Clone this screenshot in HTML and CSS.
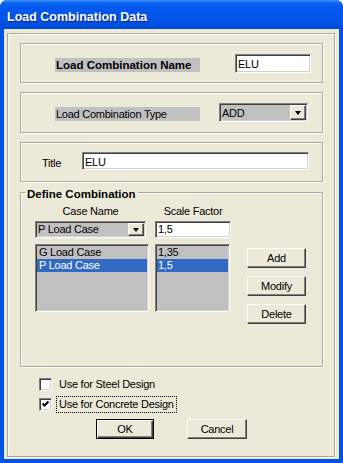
FILE: index.html
```html
<!DOCTYPE html>
<html>
<head>
    <title>Load Combination Data</title>
    <link rel="stylesheet" href="styles.css">
</head>
<body>
<div class="window">
    <div class="titlebar">Load Combination Data</div>
    <div class="client">
        <div class="frame">
            <div class="group group-name">
                <span class="tag tag-bold">Load Combination Name</span>
                <div class="field field-name">ELU</div>
            </div>

            <div class="group group-type">
                <span class="tag">Load Combination Type</span>
                <div class="combo combo-type">
                    <span class="combo-text">ADD</span>
                    <span class="drop"><i></i></span>
                </div>
            </div>

            <div class="group group-title">
                <span class="title-label">Title</span>
                <div class="field field-title">ELU</div>
            </div>

            <fieldset class="define">
                <legend>Define Combination</legend>
                <div class="define-row heads">
                    <span class="col-case">Case Name</span>
                    <span class="col-scale">Scale Factor</span>
                </div>
                <div class="define-row inputs">
                    <div class="combo combo-case">
                        <span class="combo-text">P Load Case</span>
                        <span class="drop"><i></i></span>
                    </div>
                    <div class="field field-scale">1,5</div>
                </div>
                <div class="define-row lists">
                    <ul class="list list-case">
                        <li>G Load Case</li>
                        <li class="selected">P Load Case</li>
                    </ul>
                    <ul class="list list-scale">
                        <li>1,35</li>
                        <li class="selected">1,5</li>
                    </ul>
                    <div class="side-buttons">
                        <button class="btn">Add</button>
                        <button class="btn">Modify</button>
                        <button class="btn">Delete</button>
                    </div>
                </div>
            </fieldset>

            <div class="check check-first">
                <span class="box"></span>
                <span class="check-label">Use for Steel Design</span>
            </div>
            <div class="check">
                <span class="box">
                    <svg width="9" height="9" viewBox="0 0 9 9"><path d="M1.5 3.5 L3.5 5.5 L7.5 1.5" fill="none" stroke="#000" stroke-width="2"/></svg>
                </span>
                <span class="check-label focused">Use for Concrete Design</span>
            </div>

            <div class="dialog-buttons">
                <button class="btn btn-default">OK</button>
                <button class="btn btn-cancel">Cancel</button>
            </div>
        </div>
    </div>
</div>
</body>
</html>
```

FILE: styles.css
```css
* {
    box-sizing: border-box;
}

body {
    margin: 0;
    background: #fff;
    font-family: "Liberation Sans", Arial, sans-serif;
    font-size: 11px;
    letter-spacing: -0.25px;
    color: #000;
}

/* window chrome */
.window {
    width: 343px;
    height: 463px;
    display: flex;
    flex-direction: column;
    background: #0054e3;
    border-radius: 7px 7px 0 0;
    overflow: hidden;
}

.titlebar {
    height: 29px;
    padding: 9px 0 0 7px;
    background: linear-gradient(#3d95ff 0, #0a62f2 3px, #0058ee 9px, #0055e8 20px, #004bd8 29px);
    color: #fff;
    font-size: 12.5px;
    font-weight: bold;
    letter-spacing: 0;
    line-height: 16px;
    text-shadow: 1px 1px 0 #0a1f7a;
}

.client {
    flex: 1;
    display: flex;
    margin: 0 4px 4px;
    padding: 4px 4px 2px 3px;
    background: #ece9d8;
}

/* etched frames */
.frame,
.group,
.define {
    border: 1px solid #aca899;
    box-shadow: inset 1px 1px 0 #fff, 1px 1px 0 #fff;
}

.frame {
    flex: 1;
    display: flex;
    flex-direction: column;
    padding: 9px 11px 0 12px;
}

.group {
    display: flex;
    align-items: flex-start;
}

.group-name {
    height: 40px;
    padding: 10px 0 0 34px;
}

.group-type {
    height: 41px;
    margin-top: 9px;
    padding: 10px 0 0 34px;
}

.group-title {
    height: 40px;
    margin-top: 9px;
    padding: 9px 0 0 21px;
}

.tag {
    width: 145px;
    height: 14px;
    margin-top: 4px;
    padding-left: 1px;
    background: #c0c0c0;
    line-height: 14px;
    white-space: nowrap;
}

.tag-bold {
    font-size: 11.5px;
    font-weight: bold;
    letter-spacing: 0;
}

.title-label {
    width: 40px;
    margin-top: 2px;
    line-height: 18px;
}

/* sunken inputs */
.field,
.combo,
.list,
.box {
    border: 1px solid;
    border-color: #808080 #fff #fff #808080;
    box-shadow: inset 1px 1px 0 #404040, inset -1px -1px 0 #d4d0c8;
}

.field {
    background: #fff;
    padding: 1px 2px 0;
    line-height: 16px;
}

.field-name {
    width: 76px;
    height: 19px;
    margin-left: 35px;
}

.field-title {
    width: 227px;
    height: 18px;
}

.combo {
    display: flex;
    background: #c0c0c0;
}

.combo-text {
    flex: 1;
    padding: 1px 0 0 2px;
    line-height: 16px;
}

.combo-type {
    width: 89px;
    height: 19px;
    margin-left: 19px;
}

.drop {
    width: 16px;
    margin: 1px;
    display: flex;
    align-items: center;
    justify-content: center;
    background: #ece9d8;
    border: 1px solid;
    border-color: #fff #404040 #404040 #fff;
    box-shadow: inset -1px -1px 0 #808080;
}

.drop i {
    width: 1px;
    height: 0;
    border-left: 3px solid transparent;
    border-right: 3px solid transparent;
    border-top: 4px solid #000;
}

/* define combination */
.define {
    margin: 2px 0 0;
    padding: 5px 0 42px 14px;
    min-width: 0;
}

.define legend {
    margin-left: -10px;
    padding: 4px 2px 0;
    font-size: 11.5px;
    font-weight: bold;
    letter-spacing: 0;
    line-height: 12px;
}

.define-row {
    display: flex;
}

.heads {
    line-height: 13px;
}

.col-case {
    width: 111px;
    text-align: center;
}

.col-scale {
    width: 76px;
    margin-left: 9px;
    text-align: center;
}

.inputs {
    margin-top: 3px;
}

.combo-case {
    width: 111px;
    height: 17px;
}

.combo-case .combo-text {
    padding-top: 0;
    line-height: 15px;
}

.field-scale {
    width: 76px;
    height: 17px;
    margin-left: 9px;
    padding-top: 0;
    line-height: 15px;
}

.lists {
    align-items: flex-start;
    margin-top: 6px;
}

.list {
    height: 68px;
    margin: 0;
    padding: 1px;
    list-style: none;
    background: #c0c0c0;
}

.list li {
    padding-left: 2px;
    line-height: 13px;
    white-space: nowrap;
}

.list li.selected {
    background: #316ac5;
    color: #fff;
}

.list-case {
    width: 114px;
}

.list-scale {
    width: 75px;
    margin-left: 6px;
}

.list-scale li {
    padding-left: 1px;
}

.side-buttons {
    display: flex;
    flex-direction: column;
    gap: 8px;
    margin: 4px 0 0 17px;
}

/* raised buttons */
.btn {
    width: 59px;
    height: 20px;
    padding: 0;
    background: #ece9d8;
    border: 1px solid;
    border-color: #fff #404040 #404040 #fff;
    box-shadow: inset -1px -1px 0 #808080;
    font: inherit;
    letter-spacing: inherit;
    color: #000;
    line-height: 16px;
}

.btn-default {
    width: 58px;
    border: 1px solid #000;
    box-shadow: inset 1px 1px 0 #fff, inset -1px -1px 0 #404040, inset -2px -2px 0 #808080;
}

.btn-cancel {
    width: 60px;
}

/* checkboxes */
.check {
    display: flex;
    align-items: center;
    height: 20px;
    padding-left: 19px;
}

.check-first {
    margin-top: 7px;
}

.box {
    width: 13px;
    height: 13px;
    display: flex;
    align-items: center;
    justify-content: center;
    background: #fff;
}

.box svg {
    display: block;
}

.check-label {
    margin-left: 4px;
    padding: 1px 2px;
    border: 1px dotted transparent;
    line-height: 13px;
}

.check-label.focused {
    border-color: #000;
}

.dialog-buttons {
    display: flex;
    justify-content: center;
    gap: 33px;
    margin-top: 5px;
}
```
